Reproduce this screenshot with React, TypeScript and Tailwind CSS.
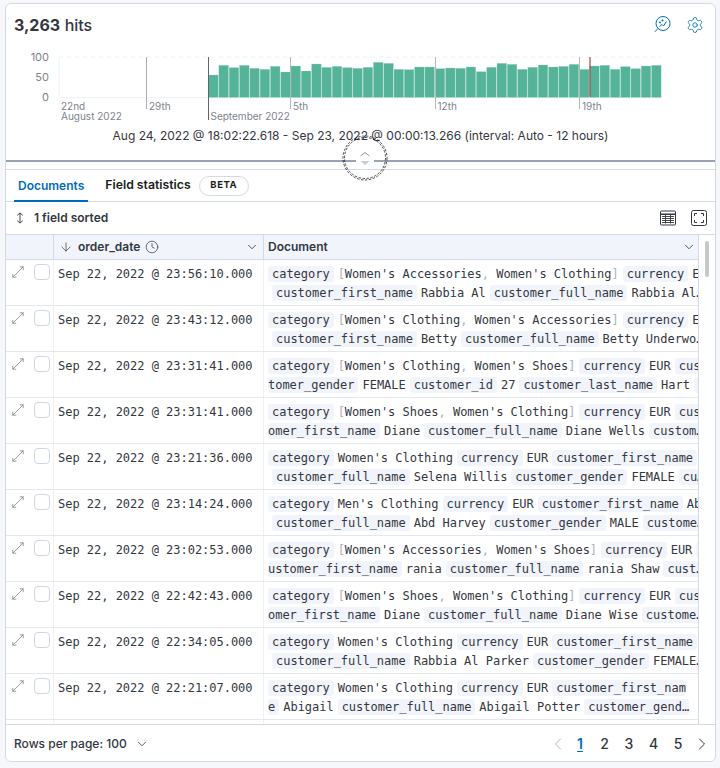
import React from "react";
import { ArrowDown, ChevronDown, ChevronLeft, ChevronRight, Clock, Settings } from "lucide-react";

const tops = [225,196,203,196,205,208,199,216,198,213,192,202,199,203,205,202,187,190,208,209,201,201,206,204,205,201,215,202,190,193,208,202,195,201,199,193,208,198,196,208,200,206,198,196];

type Seg = { c?: boolean; t: string; b?: "l" | "r" | "n" };
type Line = { indent?: boolean; segs: Seg[] };

const c = (t: string, b?: "l" | "r" | "n"): Seg => ({ c: true, t, b });
const p = (t: string): Seg => ({ t });

const rows: { date: string; lines: [Line, Line] }[] = [
  { date: "Sep 22, 2022 @ 23:56:10.000", lines: [
    { segs: [c("category"), p("[Women's Accessories, Women's Clothing]"), c("currency"), p("EUR customer_first")] },
    { indent: true, segs: [c("customer_first_name"), p("Rabbia Al"), c("customer_full_name"), p("Rabbia Al…")] } ] },
  { date: "Sep 22, 2022 @ 23:43:12.000", lines: [
    { segs: [c("category"), p("[Women's Clothing, Women's Accessories]"), c("currency"), p("EUR customer_first")] },
    { indent: true, segs: [c("customer_first_name"), p("Betty"), c("customer_full_name"), p("Betty Underwo…")] } ] },
  { date: "Sep 22, 2022 @ 23:31:41.000", lines: [
    { segs: [c("category"), p("[Women's Clothing, Women's Shoes]"), c("currency"), p("EUR"), c("customer_first")] },
    { segs: [c("tomer_gender", "l"), p("FEMALE"), c("customer_id"), p("27"), c("customer_last_name"), p("Hart"), c("customer")] } ] },
  { date: "Sep 22, 2022 @ 23:31:41.000", lines: [
    { segs: [c("category"), p("[Women's Shoes, Women's Clothing]"), c("currency"), p("EUR"), c("customer_first")] },
    { segs: [c("omer_first_name", "l"), p("Diane"), c("customer_full_name"), p("Diane Wells"), c("custom…")] } ] },
  { date: "Sep 22, 2022 @ 23:21:36.000", lines: [
    { segs: [c("category"), p("Women's Clothing"), c("currency"), p("EUR"), c("customer_first_name"), p("Selena")] },
    { indent: true, segs: [c("customer_full_name"), p("Selena Willis"), c("customer_gender"), p("FEMALE"), c("cu…")] } ] },
  { date: "Sep 22, 2022 @ 23:14:24.000", lines: [
    { segs: [c("category"), p("Men's Clothing"), c("currency"), p("EUR"), c("customer_first_name"), p("Abd")] },
    { indent: true, segs: [c("customer_full_name"), p("Abd Harvey"), c("customer_gender"), p("MALE"), c("custome…")] } ] },
  { date: "Sep 22, 2022 @ 23:02:53.000", lines: [
    { segs: [c("category"), p("[Women's Accessories, Women's Shoes]"), c("currency"), p("EUR"), c("customer")] },
    { segs: [c("ustomer_first_name", "l"), p("rania"), c("customer_full_name"), p("rania Shaw"), c("cust…")] } ] },
  { date: "Sep 22, 2022 @ 22:42:43.000", lines: [
    { segs: [c("category"), p("[Women's Shoes, Women's Clothing]"), c("currency"), p("EUR"), c("customer_first")] },
    { segs: [c("omer_first_name", "l"), p("Diane"), c("customer_full_name"), p("Diane Wise"), c("custome…")] } ] },
  { date: "Sep 22, 2022 @ 22:34:05.000", lines: [
    { segs: [c("category"), p("Women's Clothing"), c("currency"), p("EUR"), c("customer_first_name"), p("Rabbia")] },
    { indent: true, segs: [c("customer_full_name"), p("Rabbia Al Parker"), c("customer_gender"), p("FEMALE…")] } ] },
  { date: "Sep 22, 2022 @ 22:21:07.000", lines: [
    { segs: [c("category"), p("Women's Clothing"), c("currency"), p("EUR"), c("customer_first_nam", "r")] },
    { segs: [c("e", "l"), p("Abigail"), c("customer_full_name"), p("Abigail Potter"), c("customer_gend…", "r")] } ] },
];

function Plain({ t }: { t: string }) {
  const parts = t.split(/([\[\],])/);
  return (
    <span className="mr-1">
      {parts.map((x, i) =>
        x === "[" || x === "]" || x === "," ? (
          <span key={i} className="text-[#aab2c0]">{x}</span>
        ) : (
          <span key={i}>{x}</span>
        )
      )}
    </span>
  );
}

function Chip({ t, b }: { t: string; b?: string }) {
  if (b === "l") return <span className="mr-1 h-4 rounded-[3px] bg-[#f1f4fa] pr-1 leading-4">{t}</span>;
  if (b === "r") return <span className="h-4 rounded-[3px] bg-[#f1f4fa] pl-1 leading-4">{t}</span>;
  return <span className="mr-1 h-4 rounded-[3px] bg-[#f1f4fa] px-1 leading-4">{t}</span>;
}

function ExpandIcon() {
  return (
    <svg width="12" height="12" viewBox="0 0 12 12" fill="none" stroke="#7d838d" strokeWidth="0.8">
      <path d="M.8 11.2 11.2.8M7.8.8h3.4v3.4M.8 7.8v3.4h3.4" />
    </svg>
  );
}

function Row({ date, lines }: { date: string; lines: Line[] }) {
  return (
    <div className="flex h-[46px] shrink-0 border-b border-[#e3e8f0]">
      <div className="flex w-[48px] shrink-0 border-r border-[#eef1f6] pl-[6px] pt-[4px]">
        <div className="mt-[2px] w-[12px]"><ExpandIcon /></div>
        <div className="ml-[10px] h-4 w-4 rounded-[4px] border border-[#cfd6e2] bg-white" />
      </div>
      <div className="w-[210px] shrink-0 border-r border-[#eef1f6] pl-1 pt-[6px] text-[#343741]">
        <div className="h-[19px] whitespace-pre leading-[17px]">{date}</div>
      </div>
      <div className="min-w-0 flex-1 overflow-hidden pl-1 pt-[6px] text-[#343741]">
        {lines.map((l, i) => (
          <div key={i} className={l.indent ? "flex h-[19px] items-start whitespace-pre pl-1 leading-4" : "flex h-[19px] items-start whitespace-pre leading-4"}>
            {l.segs.map((s, j) => (s.c ? <Chip key={j} t={s.t} b={s.b} /> : <Plain key={j} t={s.t} />))}
          </div>
        ))}
      </div>
    </div>
  );
}

function Chart() {
  const axis = "#7d838d";
  return (
    <svg className="block shrink-0" width="709" height="82" viewBox="6 44 709 82" style={{ fontFamily: "Inter, sans-serif" }}>
      <line x1="59" x2="662" y1="57" y2="57" stroke="#eef1f6" strokeDasharray="4 4" />
      <line x1="59" x2="59" y1="57" y2="98" stroke="#eef1f6" />
      <line x1="59" x2="662" y1="97.7" y2="97.7" stroke="#eef1f6" />
      {tops.map((t, i) => {
        const x = 208.6 + i * 10.3;
        return <rect key={i} x={x} y={t / 3} width="9.6" height={97.4 - t / 3} fill="#54b399" stroke="#9ed4c3" strokeWidth="0.3" />;
      })}
      <line x1="146.5" x2="146.5" y1="57" y2="109" stroke="#a9adb4" />
      <line x1="208.5" x2="208.5" y1="57" y2="120" stroke="#5f646c" />
      <line x1="290.5" x2="290.5" y1="57" y2="109" stroke="#b4b8be" />
      <line x1="435.5" x2="435.5" y1="57" y2="109" stroke="#b4b8be" />
      <line x1="579.5" x2="579.5" y1="57" y2="109" stroke="#b4b8be" />
      <line x1="590" x2="590" y1="57" y2="97" stroke="#b5453c" strokeWidth="1.2" />
      <g fill={axis} fontSize="11" textAnchor="end">
        <text x="49" y="60.5">100</text>
        <text x="49" y="80.5">50</text>
        <text x="49" y="101">0</text>
      </g>
      <g fill={axis} fontSize="10">
        <text x="61" y="110">22nd</text>
        <text x="61" y="120">August 2022</text>
        <text x="149" y="110">29th</text>
        <text x="210.5" y="120">September 2022</text>
        <text x="293" y="110">5th</text>
        <text x="437.5" y="110">12th</text>
        <text x="582" y="110">19th</text>
      </g>
    </svg>
  );
}

function InspectIcon() {
  return (
    <svg width="17" height="17" viewBox="0 0 17 17" fill="none" stroke="#006bb8" strokeWidth="1">
      <circle cx="9" cy="7.5" r="7" />
      <path d="M4 12.5.8 15.8" />
      <path d="M5.5 10.5 8 8.5l1.5 1.5 3-4.5" />
      <circle cx="8.5" cy="4.5" r=".6" fill="#006bb8" />
      <circle cx="6" cy="6.5" r=".6" fill="#006bb8" />
    </svg>
  );
}

function TableIcon() {
  return (
    <svg width="16" height="16" viewBox="0 0 16 16" fill="none" stroke="#343741" strokeWidth="1">
      <rect x=".5" y="1" width="15" height="14" rx="1" />
      <path d="M.5 4.2h15" strokeWidth="1.4" />
      <path d="M2 6.5h12M2 8.5h12M2 10.5h12M2 12.5h12M5.5 5v8.5M10.5 5v8.5" strokeWidth="0.9" />
    </svg>
  );
}

function FullIcon() {
  return (
    <svg width="16" height="16" viewBox="0 0 16 16" fill="none" stroke="#343741" strokeWidth="1">
      <rect x=".5" y=".5" width="15" height="15" rx="2" />
      <path d="M3.5 6V3.5H6M10 3.5h2.5V6M12.5 10v2.5H10M6 12.5H3.5V10" />
    </svg>
  );
}

function SortIcon() {
  return (
    <svg width="10" height="12" viewBox="0 0 10 12" fill="none" stroke="#343741" strokeWidth="0.9">
      <path d="M5 1v10M2.2 3.4 5 .9l2.8 2.5M2.2 8.6 5 11.1l2.8-2.5" />
    </svg>
  );
}

function ResizeHandle() {
  return (
    <svg className="absolute left-[336px] top-[129px]" width="58" height="58" viewBox="0 0 58 58" fill="none">
      <circle cx="29" cy="29" r="22" stroke="#000" strokeDasharray="2.5 1.5" strokeWidth="0.7" />
      <circle cx="29" cy="29" r="20.5" stroke="#000" strokeDasharray="2.5 1.5" strokeWidth="0.7" />
      <rect x="20" y="22" width="18" height="15" rx="2" fill="#ffffff" />
      <path d="M24.5 27 29 23.5l4.5 3.5" stroke="#8f949c" strokeWidth="1" />
      <path d="M24.5 32 29 36l4.5-4z" fill="#c9ccd2" />
    </svg>
  );
}

export default function App() {
  return (
    <div className="relative h-[768px] w-[720px] overflow-hidden bg-[#f5f7fa] pb-[6px] pl-[5px] pr-[4px] pt-[3px] font-['Inter',sans-serif] text-[#343741]">
      <div className="flex h-full flex-col overflow-hidden rounded-[6px] border border-[#d3dae6] bg-white">
        <div className="flex h-[40px] shrink-0 items-center justify-between pl-2 pr-[11px] pt-[1px]">
          <div className="text-base"><span className="font-bold">3,263</span> <span className="font-medium">hits</span></div>
          <div className="flex items-center gap-[15px]">
            <InspectIcon />
            <Settings size={18} strokeWidth={1.1} color="#006bb8" />
          </div>
        </div>
        <Chart />
        <div className="h-[20px] shrink-0 text-center text-xs leading-[20px]">Aug 24, 2022 @ 18:02:22.618 - Sep 23, 2022 @ 00:00:13.266 (interval: Auto - 12 hours)</div>
        <div className="h-[14px] shrink-0" />
        <div className="h-[2px] shrink-0 bg-[#98a2b3]" />
        <div className="h-[7px] shrink-0" />

        <div className="flex h-[33px] shrink-0 items-center border-y border-[#d3dae6] pl-2">
          <div className="relative flex h-full items-center px-1 text-xs font-semibold text-[#006bb8]">
            Documents
            <div className="absolute -bottom-px left-0 right-0 h-[2px] bg-[#006bb8]" />
          </div>
          <div className="ml-[17px] text-[12.25px] font-semibold text-[#1a1c21]">Field statistics</div>
          <div className="ml-2 flex h-[20px] w-[50px] items-center justify-center rounded-full border border-[#d3dae6] text-[9.5px] font-bold tracking-[0.5px] text-[#1a1c21]">BETA</div>
        </div>

        <div className="flex h-[33px] shrink-0 items-center border-b border-[#d3dae6] pl-[9px] pr-[8px]">
          <SortIcon />
          <div className="ml-[9px] flex-1 text-xs font-semibold">1 field sorted</div>
          <TableIcon />
          <div className="ml-[15px]"><FullIcon /></div>
        </div>

        <div className="flex min-h-0 flex-1 overflow-hidden border-b border-[#d3dae6]">
          <div className="min-w-0 flex-1 overflow-hidden font-['DejaVu_Sans_Mono',monospace] text-xs tracking-[-0.02px]">
            <div className="flex h-[25px] border-b border-[#d3dae6] bg-[#f1f4fa] font-['Inter',sans-serif] font-semibold tracking-normal">
              <div className="w-[48px] shrink-0 border-r border-[#d3dae6]" />
              <div className="flex w-[210px] shrink-0 items-center border-r border-[#d3dae6] pl-[5px] pr-[4px]">
                <ArrowDown size={14} strokeWidth={1.2} />
                <span className="ml-[5px]">order_date</span>
                <Clock size={14} strokeWidth={1.2} className="ml-[5px]" />
                <ChevronDown size={14} strokeWidth={1.4} className="ml-auto" />
              </div>
              <div className="flex flex-1 items-center pl-1 pr-[2px]">
                <span className="flex-1">Document</span>
                <ChevronDown size={14} strokeWidth={1.4} />
              </div>
            </div>
            {rows.map((r, i) => <Row key={i} date={r.date} lines={r.lines} />)}
            <div className="flex h-[10px]">
              <div className="w-[48px] border-r border-[#eef1f6]" />
              <div className="w-[210px] border-r border-[#eef1f6]" />
            </div>
          </div>
          <div className="w-[17px] shrink-0 border-l border-[#d3dae6] pl-[6px] pt-[6px]">
            <div className="h-[36px] w-[4px] rounded-full bg-[#c4c8ce]" />
          </div>
        </div>

        <div className="flex h-[36px] shrink-0 items-center justify-between pl-2 pr-[3px] pt-[2px] text-xs">
          <div className="flex items-center">
            <span className="font-medium">Rows per page: 100</span>
            <ChevronDown size={14} strokeWidth={1.4} className="ml-[8px]" />
          </div>
          <div className="flex items-center text-sm font-medium">
            <ChevronLeft size={20} strokeWidth={1.2} color="#aab2c0" />
            <div className="flex w-[124px] justify-between pl-[4px] pr-[6px]">
              <span className="w-[16px] text-center font-semibold text-[#006bb8] underline underline-offset-2">1</span>
              <span className="w-[16px] text-center">2</span>
              <span className="w-[16px] text-center">3</span>
              <span className="w-[16px] text-center">4</span>
              <span className="w-[16px] text-center">5</span>
            </div>
            <ChevronRight size={20} strokeWidth={1.2} />
          </div>
        </div>
      </div>
      <ResizeHandle />
    </div>
  );
}
